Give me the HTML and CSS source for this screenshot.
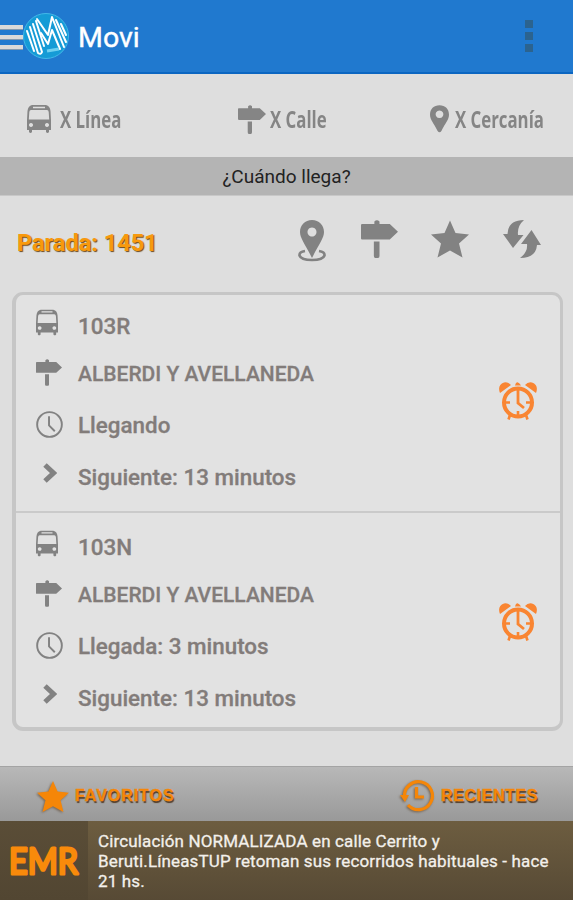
FILE: index.html
```html
<!DOCTYPE html>
<html lang="es">

<head>
    <meta charset="UTF-8">
    <meta name="viewport" content="width=device-width, initial-scale=1.0">
    <title>Movi</title>
    <link rel="stylesheet" href="styles.css">
</head>

<body>
    <!-- shared icons -->
    <svg class="sprite" width="0" height="0">
        <symbol id="bus" viewBox="0 0 24 28">
            <path fill-rule="evenodd" d="M5 0h14q4 1 4.500 6L24 15v10h-2v2q-1.500 2-3 0v-2H5v2q-1.500 2-3 0v-2H0V15L.5 6Q1 1 5 0zM6 1.800v1.400h12V1.800zM4 5Q2.500 5 2.300 7L1.800 14.500h20.400L21.700 7Q21.500 5 20 5zM4 18a2 2 0 1 0 .01 0zM20 18a2 2 0 1 0 .01 0z" />
        </symbol>
        <symbol id="sign" viewBox="0 0 36 37">
            <path d="M1 4h12V1.500Q15.500-1 18 1.500V4h10l8 7.500-8 7.500H1Q0 19 0 18V5Q0 4 1 4zM12.500 21h5.500v14q0 2-1.500 2h-2.500q-1.500 0-1.500-2z" />
        </symbol>
        <symbol id="pin" viewBox="0 0 20 29">
            <path fill-rule="evenodd" d="M10 0C4 0 0 4 0 10c0 5 4 9 8 17q2 3 4 0c4-8 8-12 8-17 0-6-4-10-10-10zM10 5.500a4 4 0 1 1-.01 0z" />
        </symbol>
        <symbol id="star" viewBox="0 0 38 37">
            <path d="M19 0l5.500 12.500L38 14 28 23l3.500 14L19 30 6.500 37 10 23 0 14l13.500-1.500z" />
        </symbol>
        <symbol id="clock" viewBox="0 0 28 28">
            <circle cx="14" cy="14" r="12.800" fill="none" stroke="currentColor" stroke-width="2" />
            <path d="M13.500 5.500V15l6 6" fill="none" stroke="currentColor" stroke-width="2" />
        </symbol>
        <symbol id="chevron" viewBox="0 0 14 20">
            <path d="M2 2l8.500 8L2 18" fill="none" stroke="currentColor" stroke-width="5" />
        </symbol>
        <symbol id="alarm" viewBox="0 0 38 38">
            <g fill="none" stroke="currentColor">
                <circle cx="19" cy="20.500" r="14" stroke-width="4" />
                <path d="M19 8v13l6 5" stroke-width="2.800" />
                <path d="M7 20.500h4M27 20.500h4M19 29v4M11 33l-1.500 4.500M27 33l1.500 4.500" stroke-width="2.600" />
            </g>
            <path d="M1 11Q-2 3 5 .5Q9-.5 12 3zM37 11Q40 3 33 .5Q29-.5 26 3zM16 3.500Q17-.5 19 .5T22 3.500z" />
        </symbol>
    </svg>

    <header class="topbar">
        <div class="menu"><i></i><i></i><i></i></div>
        <svg class="logo" viewBox="0 0 46 46">
            <circle cx="23" cy="23" r="22.500" fill="#159bd6" stroke="#43b8e8" />
            <g fill="none" stroke="#fff" stroke-width="2" stroke-linejoin="round" stroke-linecap="round">
                <path d="M4 18l7 20M7 14l8 26q3 2 4-1L10 11" />
                <path d="M13 8l8 25M14 6l11 16 4-18 12 30" />
                <path d="M18 20l7 11 4-14 8 19M33 7l10 22M38 11l5 11" />
            </g>
            <path d="M24 38l12-2" stroke="#6fd0f0" stroke-width="3" />
        </svg>
        <h1 class="title">Movi</h1>
        <div class="more"><i></i><i></i><i></i></div>
    </header>

    <nav class="tabs">
        <a class="tab tab-line"><svg width="24" height="28"><use href="#bus" /></svg><span>X Línea</span></a>
        <a class="tab tab-street"><svg width="28" height="29"><use href="#sign" /></svg><span>X Calle</span></a>
        <a class="tab tab-near"><svg width="19" height="28"><use href="#pin" /></svg><span>X Cercanía</span></a>
    </nav>

    <div class="question">¿Cuándo llega?</div>

    <div class="stop">
        <h2 class="stop-name">Parada: 1451</h2>
        <div class="actions">
            <svg width="28" height="42" viewBox="0 0 28 42">
                <path fill-rule="evenodd" d="M14 0C7 0 2 5 2 12c0 6 5 12 12 26 7-14 12-20 12-26C26 5 21 0 14 0zM14 7.500a4.500 4.500 0 1 1-.01 0z" />
                <path d="M7 31Q1 32 1.500 35.500 3 40 14 40t12.500-4.500Q27 32 21 31" fill="none" stroke="#828282" stroke-width="2.600" />
            </svg>
            <svg class="act-sign" width="37" height="38"><use href="#sign" /></svg>
            <svg width="38" height="38"><use href="#star" /></svg>
            <svg width="38" height="38" viewBox="0 0 38 38">
                <path d="M21 0Q5 0 4.500 14H0l10 14 10.500-13H15Q14 6 21 0z" />
                <path d="M17 38q16 0 17-13h4L28.500 10 18 24h6q1 8-7 14z" />
            </svg>
        </div>
    </div>

    <main class="card">
        <section class="arrival">
            <ul class="info">
                <li><svg class="i-bus" width="22" height="27"><use href="#bus" /></svg><span>103R</span></li>
                <li><svg class="i-sign" width="26" height="27"><use href="#sign" /></svg><span class="street">ALBERDI Y AVELLANEDA</span></li>
                <li><svg class="i-clock" width="27" height="27"><use href="#clock" /></svg><span>Llegando</span></li>
                <li><svg class="i-next" width="14" height="20"><use href="#chevron" /></svg><span>Siguiente: 13 minutos</span></li>
            </ul>
            <svg class="alarm" width="38" height="38"><use href="#alarm" /></svg>
        </section>
        <section class="arrival">
            <ul class="info">
                <li><svg class="i-bus" width="22" height="27"><use href="#bus" /></svg><span>103N</span></li>
                <li><svg class="i-sign" width="26" height="27"><use href="#sign" /></svg><span class="street">ALBERDI Y AVELLANEDA</span></li>
                <li><svg class="i-clock" width="27" height="27"><use href="#clock" /></svg><span>Llegada: 3 minutos</span></li>
                <li><svg class="i-next" width="14" height="20"><use href="#chevron" /></svg><span>Siguiente: 13 minutos</span></li>
            </ul>
            <svg class="alarm" width="38" height="38"><use href="#alarm" /></svg>
        </section>
    </main>

    <div class="shortcuts">
        <a class="shortcut"><svg width="32" height="31"><use href="#star" /></svg><span>FAVORITOS</span></a>
        <a class="shortcut">
            <svg width="35" height="34" viewBox="0 0 35 34">
                <path d="M4.500 18A14 14 0 1 1 8 26" fill="none" stroke="#f58608" stroke-width="3.200" />
                <path d="M16.500 8v10h7.500" fill="none" stroke="#f58608" stroke-width="3.200" />
                <path d="M0 16h9l-4 7z" />
            </svg>
            <span>RECIENTES</span>
        </a>
    </div>

    <footer class="news">
        <div class="news-logo">
            <svg width="88" height="78" viewBox="0 0 88 78">
                <text x="9" y="52.500" textLength="69" lengthAdjust="spacingAndGlyphs">EMR</text>
            </svg>
        </div>
        <p class="news-text">Circulación NORMALIZADA en calle Cerrito y<br>Beruti.LíneasTUP retoman sus recorridos habituales - hace<br>21 hs.</p>
    </footer>
</body>

</html>
```
FILE: styles.css
```css
* {
    margin: 0;
    padding: 0;
    box-sizing: border-box;
}

body {
    width: 573px;
    height: 900px;
    overflow: hidden;
    background: #dedede;
    font-family: Roboto, "Liberation Sans", sans-serif;
}

svg {
    display: block;
    flex: none;
    fill: currentColor;
}

.sprite {
    position: absolute;
}

/* top bar */
.topbar {
    display: flex;
    align-items: center;
    height: 74px;
    background: #2079cf;
    border-bottom: 2px solid #0b66c1;
}

.menu {
    display: grid;
    gap: 5px;
    width: 23px;
    padding-top: 2px;
}

.menu i {
    height: 5px;
    background: #d9d9d9;
    border-bottom: 1px solid #8299af;
}

.logo {
    width: 46px;
    height: 46px;
}

.title {
    margin-left: 9px;
    padding-top: 3px;
    font-size: 28.5px;
    font-weight: 400;
    color: #fff;
    -webkit-text-stroke: .4px #fff;
}

.more {
    display: grid;
    gap: 4px;
    margin-left: auto;
    margin-right: 40px;
}

.more i {
    width: 8px;
    height: 8px;
    background: #2b638f;
}

/* search tabs */
.tabs {
    display: flex;
    height: 83px;
    padding: 7px 28px 0 27px;
    justify-content: space-between;
    align-items: center;
    color: #858585;
}

.tab {
    display: flex;
    align-items: center;
}

.tab span {
    font: bold 24px/30px "Open Sans", "Noto Sans", sans-serif;
    white-space: nowrap;
    transform: scaleX(.7);
    transform-origin: left;
}

.tab-line {
    width: 96px;
    gap: 9px;
}

.tab-street {
    width: 92px;
    gap: 4px;
    margin-left: 15px;
}

.tab-near {
    width: 115px;
    gap: 6px;
}

.question {
    height: 39px;
    background: #b4b4b4;
    border-bottom: 1px solid #c8c8c8;
    font-size: 19px;
    line-height: 40px;
    text-align: center;
    color: #222;
}

/* current stop */
.stop {
    display: flex;
    justify-content: space-between;
    height: 96px;
    padding: 24px 32px 0 17px;
}

.stop-name {
    font-size: 23.5px;
    font-weight: 700;
    line-height: 47px;
    color: #f8990d;
    text-shadow: 1px 1px 1px #6b481b;
}

.actions {
    display: flex;
    gap: 34px;
    color: #828282;
}

.act-sign {
    margin: 0 -1px 0 1px;
}

/* arrivals */
.card {
    width: 551px;
    height: 439px;
    margin-left: 12px;
    background: #e2e2e2;
    border: 3px solid #c6c6c6;
    border-width: 3px 3px 4px 4px;
    border-radius: 11px;
}

.arrival {
    display: flex;
    justify-content: space-between;
    padding: 7px 23px 0 20px;
}

.arrival:first-child {
    height: 218px;
    border-bottom: 2px solid #cacaca;
}

.arrival:last-child {
    padding-top: 10px;
}

.info {
    display: grid;
    grid-template-rows: 48px 47px 56px 48px;
    list-style: none;
    color: #827c7a;
}

.info li {
    display: grid;
    grid-template-columns: 42px auto;
    align-items: center;
    font-size: 22.4px;
    font-weight: 500;
    white-space: nowrap;
    -webkit-text-stroke: .3px #827c7a;
}

.info svg {
    color: #828282;
}

.i-bus {
    margin-bottom: 8px;
}

.i-sign,
.i-clock {
    margin-bottom: 2px;
}

.i-next {
    margin: 0 0 8px 7px;
}

.info .street {
    font-size: 21px;
}

.alarm {
    margin-top: 80px;
    color: #f98532;
}

/* shortcuts */
.shortcuts {
    display: flex;
    justify-content: space-between;
    align-items: center;
    height: 55px;
    margin-top: 35px;
    padding: 4px 35px 0 37px;
    background: linear-gradient(#b8b8b8, #999);
    border-top: 1px solid #a4a4a4;
    color: #f58608;
}

.shortcut {
    display: flex;
    align-items: center;
    gap: 6px;
    font: bold 16px "Liberation Sans", Arial, sans-serif;
    letter-spacing: .95px;
    -webkit-text-stroke: .4px #f58608;
    text-shadow: 1px 2px 1px #513d29;
}

.shortcut:last-child {
    letter-spacing: .6px;
}

.shortcut svg {
    overflow: visible;
    filter: drop-shadow(-1px 1px 1px #765);
}

/* news */
.news {
    display: flex;
    height: 80px;
    background: linear-gradient(#6d5d40, #574a35);
    border-bottom: 1px solid #35251f;
}

.news-logo {
    width: 88px;
    background: linear-gradient(#5a4d37, #524632);
}

.news-logo text {
    font: 400 36px Lato, Roboto, sans-serif;
    fill: #f88a0b;
    stroke: #f88a0b;
    stroke-width: 3px;
    stroke-linejoin: round;
}

.news-text {
    padding: 10px 0 0 10px;
    font-size: 17px;
    line-height: 20px;
    letter-spacing: .14px;
    color: #f3f0eb;
    -webkit-text-stroke: .3px #f3f0eb;
    white-space: nowrap;
}
```
